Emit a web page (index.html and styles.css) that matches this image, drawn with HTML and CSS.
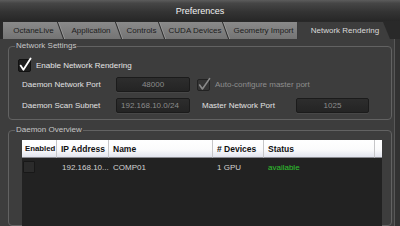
FILE: index.html
```html
<!DOCTYPE html>
<html>
<head>
<meta charset="utf-8">
<title>Preferences</title>
<link rel="stylesheet" href="styles.css">
</head>
<body>
<div class="window">
  <div class="titlebar">Preferences</div>
  <div class="tabbar">
    <div class="tab t1">OctaneLive</div>
    <div class="tab t2">Application</div>
    <div class="tab t3">Controls</div>
    <div class="tab t4">CUDA Devices</div>
    <div class="tab t5">Geometry Import</div>
    <div class="tab active">Network Rendering</div>
  </div>
  <div class="pane">
    <fieldset class="group settings">
      <legend>Network Settings</legend>
      <div class="settings-body">
        <div class="check-row">
          <svg class="cb" width="13" height="13" viewBox="0 0 13 13"><rect x="0.5" y="0.5" width="12" height="12" rx="1.5" fill="#1e1e1e" stroke="#111"/><path d="M2.6 6.6 L5.4 10.8 L12.6 -0.6" fill="none" stroke="#fff" stroke-width="1.8" stroke-linecap="round" stroke-linejoin="round"/></svg>
          <span class="check-label">Enable Network Rendering</span>
        </div>
        <div class="form-grid">
          <span class="lbl">Daemon Network Port</span>
          <div class="field center">48000</div>
          <div class="auto">
            <svg class="cb" width="13" height="12" viewBox="0 0 13 12"><rect x="0.5" y="0.5" width="12" height="11" rx="1.5" fill="#353535" stroke="#222"/><path d="M2.6 6 L5.4 10 L12.6 -0.4" fill="none" stroke="#8a8a8a" stroke-width="1.6" stroke-linecap="round" stroke-linejoin="round"/></svg>
            <span class="disabled">Auto-configure master port</span>
          </div>
          <span class="lbl">Daemon Scan Subnet</span>
          <div class="field">192.168.10.0/24</div>
          <span class="lbl master">Master Network Port</span>
          <div class="field center">1025</div>
        </div>
      </div>
    </fieldset>
    <fieldset class="group overview">
      <legend>Daemon Overview</legend>
      <div class="overview-body">
        <div class="table">
          <div class="trow head">
            <div class="th">Enabled</div>
            <div class="th">IP Address</div>
            <div class="th">Name</div>
            <div class="th"># Devices</div>
            <div class="th">Status</div>
            <div class="th"></div>
          </div>
          <div class="trow">
            <div class="td first"><span class="rowcb"></span></div>
            <div class="td ip">192.168.10...</div>
            <div class="td">COMP01</div>
            <div class="td">1 GPU</div>
            <div class="td ok">available</div>
            <div class="td"></div>
          </div>
        </div>
      </div>
    </fieldset>
  </div>
</div>
</body>
</html>
```
FILE: styles.css
```css
* { box-sizing: border-box; }
html, body { margin: 0; padding: 0; }
body {
  background: #333;
  font-family: "Liberation Sans", Arial, sans-serif;
  font-size: 8px;
  color: #e0e0e0;
}
.window {
  width: 400px;
  height: 226px;
  overflow: hidden;
  display: flex;
  flex-direction: column;
  background: #323232;
}
.titlebar {
  height: 21px;
  flex: none;
  display: flex;
  align-items: center;
  justify-content: center;
  font-size: 9px;
  color: #f2f2f2;
  background: linear-gradient(#5c5c5c, #464646 15%, #343434 55%, #272727);
}
.tabbar {
  height: 18px;
  flex: none;
  display: flex;
  padding: 1px 0 0 3px;
  background: #292929;
}
.tab {
  position: relative;
  height: 17px;
  flex: none;
  display: flex;
  align-items: center;
  justify-content: center;
  padding-left: 4px;
  white-space: nowrap;
  color: #1d1d1d;
  background: linear-gradient(#8a8a8a, #747474);
}
.tab::after {
  content: "";
  position: absolute;
  z-index: 1;
  top: 0;
  right: -1px;
  width: 1px;
  height: 100%;
  background: #2c2c2c;
  box-shadow: 1px 0 0 #999;
  transform: skewX(20deg);
}
.t1 { width: 57px; }
.t2 { width: 58px; }
.t3 { width: 43px; }
.t4 { width: 64px; }
.t5 { width: 73px; }
.t5::after { transform: none; right: 0; box-shadow: none; background: #3a3a3a; }
.active {
  width: 92px;
  padding-left: 2px;
  color: #dadada;
  background: #3d3d3d;
  clip-path: polygon(0 0, calc(100% - 7px) 0, 100% 100%, 0 100%);
}
.active::after { display: none; }
.pane {
  flex: 1;
  min-height: 0;
  width: 395px;
  display: flex;
  flex-direction: column;
  gap: 5px;
  padding: 2px 2px 0 8px;
  background: #3d3d3d;
  border-right: 1px solid #585858;
}
.group {
  margin: 0;
  padding: 0;
  min-width: 0;
  border: 1px solid #626262;
  border-radius: 4px;
}
.group legend {
  margin-left: 6px;
  padding: 0 1px;
  line-height: 10px;
  font-size: 8px;
  color: #c6c6c6;
}
.settings-body {
  padding: 8px 0 6px 9px;
}
.check-row {
  height: 13px;
  display: flex;
  align-items: center;
}
.cb { overflow: visible; flex: none; display: block; }
.check-label { margin-left: 5px; color: #e6e6e6; }
.form-grid {
  margin: 5px 0 0 4px;
  display: grid;
  grid-template-columns: 94px 74px 106px 73px;
  grid-auto-rows: 15px;
  row-gap: 6px;
}
.lbl { display: flex; align-items: center; white-space: nowrap; color: #e2e2e2; }
.master { padding-left: 12px; }
.field {
  display: flex;
  align-items: center;
  padding-left: 4px;
  color: #8c8c8c;
  border: 1px solid #1b1b1b;
  border-radius: 2px;
  background: linear-gradient(#2d2d2d, #242424);
  box-shadow: 0 1px 0 #474747;
}
.field.center { justify-content: center; padding-left: 0; }
.auto {
  grid-column: 3 / 5;
  display: flex;
  align-items: center;
  gap: 5px;
  padding-left: 7px;
}
.disabled { color: #8e8e8e; }
.overview { flex: 1; min-height: 0; }
.overview-body {
  height: 100%;
  padding: 5px 8px 0 13px;
}
.table {
  width: 360px;
  height: 120px;
  background: #222;
}
.trow {
  display: grid;
  grid-template-columns: 35px 52px 104px 51px 111px 7px;
  height: 18px;
}
.th {
  display: flex;
  align-items: center;
  padding-left: 4px;
  white-space: nowrap;
  overflow: hidden;
  font-weight: bold;
  font-size: 8.5px;
  color: #111;
  background: linear-gradient(#ffffff, #fbfbfc 55%, #e2e4ee);
  border-right: 1px solid #c6c6c8;
  border-bottom: 1px solid #8a8a90;
}
.th:first-child { padding-left: 3px; font-size: 7.8px; }
.th:last-child { border-right: none; }
.td {
  display: flex;
  align-items: center;
  padding-left: 4px;
  color: #d2d2d2;
}
.td.first { padding-left: 1px; }
.td.ip { padding-left: 5px; }
.rowcb {
  width: 12px;
  height: 12px;
  border: 1px solid #181818;
  border-radius: 1px;
  background: #2b2b2b;
}
.ok { color: #2fc42f; }
```
